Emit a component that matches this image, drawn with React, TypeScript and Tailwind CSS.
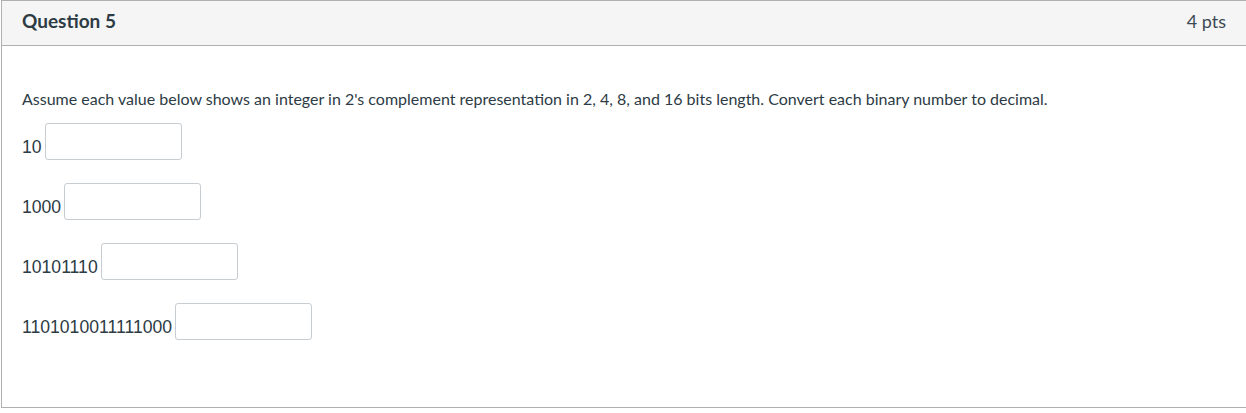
import React from "react";

const rows = ["10", "1000", "10101110", "1101010011111000"];

export default function App() {
  return (
    <div className="w-[1246px] h-[413px] bg-white overflow-hidden">
      <div className="ml-px border-t border-l border-b border-[#b0b0b0] h-[408px] text-[#2d3b45]" style={{ fontFamily: "Lato, 'Liberation Sans', sans-serif" }}>
        <div className="h-[45px] bg-[#f5f5f5] border-b border-[#b0b0b0] flex items-center justify-between pl-[20px] pr-[20px] pb-[3px]">
          <span className="text-[19px] font-bold">Question 5</span>
          <span className="text-[18px] text-[#3c4a54]">4 pts</span>
        </div>
        <div className="pl-[20px] pt-[42px]">
          <p className="text-[16px] leading-[22px]">
            Assume each value below shows an integer in 2's complement representation in 2, 4, 8, and 16 bits length. Convert each binary number to decimal.
          </p>
          <div className="mt-[13px] flex flex-col gap-[23px]">
            {rows.map((r) => (
              <div key={r} className="flex items-end h-[37px] gap-[3px]" style={{ fontFamily: "'Liberation Sans', Arial, sans-serif" }}>
                <span className="text-[17.6px] leading-[20px] mb-[3px]">{r}</span>
                <input
                  type="text"
                  className="w-[137px] h-[37px] border border-[#c7cdd1] rounded-[3px] bg-white outline-none"
                />
              </div>
            ))}
          </div>
        </div>
      </div>
    </div>
  );
}
